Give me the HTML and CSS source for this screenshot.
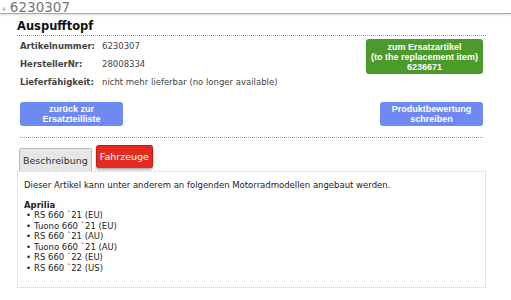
FILE: index.html
```html
<!DOCTYPE html>
<html lang="de">
<head>
    <meta charset="UTF-8">
    <meta name="viewport" content="width=device-width, initial-scale=1.0">
    <title>6230307</title>
    <link rel="stylesheet" href="styles.css">
</head>
<body>

    <div class="topbar">
        <span class="crumb-icon">&#9650;</span>
        <span class="crumb">6230307</span>
    </div>

    <div class="container">
        <h1>Auspufftopf</h1>

        <div class="info-row">
            <table class="info">
                <tr><th>Artikelnummer:</th><td>6230307</td></tr>
                <tr><th>HerstellerNr:</th><td>28008334</td></tr>
                <tr><th>Lieferfähigkeit:</th><td>nicht mehr lieferbar (no longer available)</td></tr>
            </table>
            <a class="btn btn-green">zum Ersatzartikel<br>(to the replacement item)<br>6236671</a>
        </div>

        <div class="button-row">
            <a class="btn btn-blue">zurück zur<br>Ersatzteilliste</a>
            <a class="btn btn-blue">Produktbewertung<br>schreiben</a>
        </div>

        <div class="tabs">
            <span class="tab">Beschreibung</span>
            <span class="tab tab-active">Fahrzeuge</span>
        </div>

        <div class="tab-content">
            <p>Dieser Artikel kann unter anderem an folgenden Motorradmodellen angebaut werden.</p>
            <div class="brand">Aprilia</div>
            <ul>
                <li>RS 660 `21 (EU)</li>
                <li>Tuono 660 `21 (EU)</li>
                <li>RS 660 `21 (AU)</li>
                <li>Tuono 660 `21 (AU)</li>
                <li>RS 660 `22 (EU)</li>
                <li>RS 660 `22 (US)</li>
            </ul>
        </div>
    </div>

</body>
</html>
```

FILE: styles.css
```css
body {
    margin: 0;
    font-family: "DejaVu Sans", Verdana, sans-serif;
    background-color: #ffffff;
    color: #222;
}

.topbar {
    height: 13px;
    border-bottom: 1px solid #aaa;
    box-shadow: 0 1px 2px rgba(0, 0, 0, 0.15);
    display: flex;
    align-items: center;
    gap: 4px;
    padding-left: 2px;
    overflow: hidden;
}

.crumb-icon {
    font-size: 5px;
    color: #bbb;
    margin-top: 3px;
}

.crumb {
    font-size: 13.5px;
    color: #777;
    line-height: 13px;
    margin-top: 2px;
}

.container {
    width: 469px;
    margin-left: 17px;
    padding-top: 5px;
}

h1 {
    font-size: 11.5px;
    margin: 0;
    padding-bottom: 2px;
    border-bottom: 1px dotted #999;
    color: #111;
}

.info-row {
    display: flex;
    justify-content: space-between;
    align-items: flex-start;
}

.info {
    border-collapse: collapse;
    margin-top: 2px;
    margin-left: 1px;
    font-size: 8.5px;
    line-height: 10px;
    color: #444;
}

.info th {
    text-align: left;
    padding: 3px 0 5px 2px;
    width: 82px;
    font-weight: bold;
}

.info td {
    padding: 3px 0 5px 0;
}

.btn {
    display: block;
    color: #fff;
    font-family: "Liberation Sans", Arial, sans-serif;
    font-weight: bold;
    text-align: center;
    border-radius: 3px;
    font-size: 9px;
    line-height: 10px;
}

.btn-green {
    background-color: #4c9a2c;
    width: 117px;
    padding: 3px 0 2px 0;
    margin-top: 3px;
    margin-right: 3px;
}

.btn-blue {
    background-color: #6f89f2;
    width: 103px;
    padding: 2px 0 2px 0;
}

.button-row {
    display: flex;
    justify-content: space-between;
    margin: 10px 3px 0 3px;
    padding-bottom: 11px;
    border-bottom: 1px dotted #999;
}

.tabs {
    display: flex;
    align-items: flex-end;
    gap: 4px;
    margin-top: 7px;
    padding-left: 2px;
}

.tab {
    font-size: 9.5px;
    color: #333;
    background-color: #e6e6e6;
    border: 1px solid #bbb;
    border-bottom: none;
    border-radius: 2px 2px 0 0;
    padding: 6px 3px 5px 3px;
}

.tab-active {
    background-color: #e52b1f;
    border-color: #c21c12;
    color: #fff;
    padding: 5px 3px 6px 3px;
    margin-bottom: 3px;
    box-shadow: 0 2px 2px rgba(0, 0, 0, 0.3);
    border-radius: 3px;
}

.tab-content {
    border: 1px dotted #ccc;
    height: 117px;
    padding: 8px 6px 0 6px;
    font-size: 8.5px;
    color: #222;
    box-sizing: border-box;
}

.tab-content p {
    margin: 0 0 10px 0;
}

.brand {
    font-weight: bold;
}

ul {
    margin: 0;
    padding-left: 2px;
    list-style: none;
}

li {
    line-height: 10.5px;
}

li::before {
    content: "\2022";
    margin-right: 3px;
}
```
